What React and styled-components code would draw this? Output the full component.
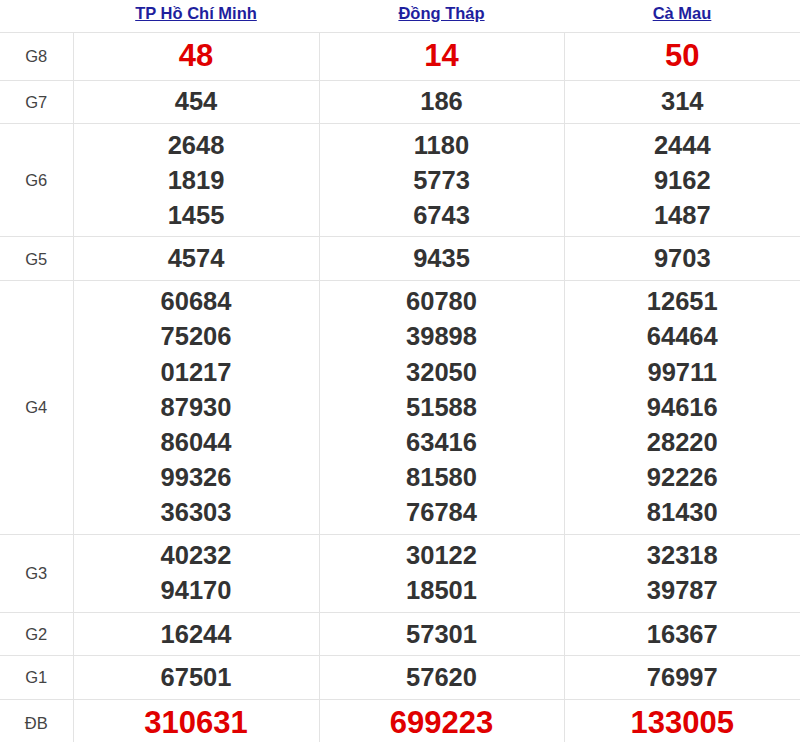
import styled, { createGlobalStyle } from 'styled-components';

const GlobalStyle = createGlobalStyle`
  body {
    margin: 0;
    background: #fff;
    font-family: 'Liberation Sans', Arial, sans-serif;
  }
`;

const provinces = ['TP Hồ Chí Minh', 'Đồng Tháp', 'Cà Mau'];

const prizes = [
  { label: 'G8', big: true, values: [['48'], ['14'], ['50']] },
  { label: 'G7', values: [['454'], ['186'], ['314']] },
  {
    label: 'G6',
    values: [
      ['2648', '1819', '1455'],
      ['1180', '5773', '6743'],
      ['2444', '9162', '1487'],
    ],
  },
  { label: 'G5', values: [['4574'], ['9435'], ['9703']] },
  {
    label: 'G4',
    values: [
      ['60684', '75206', '01217', '87930', '86044', '99326', '36303'],
      ['60780', '39898', '32050', '51588', '63416', '81580', '76784'],
      ['12651', '64464', '99711', '94616', '28220', '92226', '81430'],
    ],
  },
  { label: 'G3', values: [['40232', '94170'], ['30122', '18501'], ['32318', '39787']] },
  { label: 'G2', values: [['16244'], ['57301'], ['16367']] },
  { label: 'G1', values: [['67501'], ['57620'], ['76997']] },
  { label: 'ĐB', big: true, values: [['310631'], ['699223'], ['133005']] },
];

export default function App() {
  return (
    <>
      <GlobalStyle />
      <Table>
        <colgroup>
          <col style={{ width: 73 }} />
          <col style={{ width: 246 }} />
          <col style={{ width: 245 }} />
          <col />
        </colgroup>
        <thead>
          <tr>
            <HeadCell />
            {provinces.map((p) => (
              <HeadCell key={p}>
                <ProvinceLink href="#">{p}</ProvinceLink>
              </HeadCell>
            ))}
          </tr>
        </thead>
        <tbody>
          {prizes.map((row) => (
            <tr key={row.label}>
              <LabelCell>{row.label}</LabelCell>
              {row.values.map((nums, i) => (
                <NumCell key={i}>
                  {nums.map((n) => (
                    <Number key={n} $big={row.big}>
                      {n}
                    </Number>
                  ))}
                </NumCell>
              ))}
            </tr>
          ))}
        </tbody>
      </Table>
    </>
  );
}

const Table = styled.table`
  width: 100%;
  border-collapse: collapse;
  table-layout: fixed;
  font-family: 'Liberation Sans', Arial, sans-serif;
`;

const HeadCell = styled.th`
  height: 32px;
  padding: 3px 0 0;
  box-sizing: border-box;
  text-align: center;
  vertical-align: top;
  border-bottom: 1px solid #e3e3e3;
`;

const ProvinceLink = styled.a`
  color: #1f1f9e;
  font-size: 16.5px;
  line-height: 20px;
  font-weight: bold;
  text-decoration: underline;
`;

const LabelCell = styled.td`
  border: 1px solid #e3e3e3;
  border-left: none;
  text-align: center;
  vertical-align: middle;
  color: #444;
  font-size: 16.5px;
  line-height: 20px;
  padding: 3.6px 0;
`;

const NumCell = styled.td`
  border: 1px solid #e3e3e3;
  text-align: center;
  vertical-align: middle;
  padding: 3.6px 0;

  &:last-child {
    border-right: none;
  }
`;

const Number = styled.div`
  font-weight: bold;
  font-size: ${(p) => (p.$big ? '31px' : '25.5px')};
  line-height: ${(p) => (p.$big ? '40px' : '35.1px')};
  color: ${(p) => (p.$big ? '#e00000' : '#333')};
`;
